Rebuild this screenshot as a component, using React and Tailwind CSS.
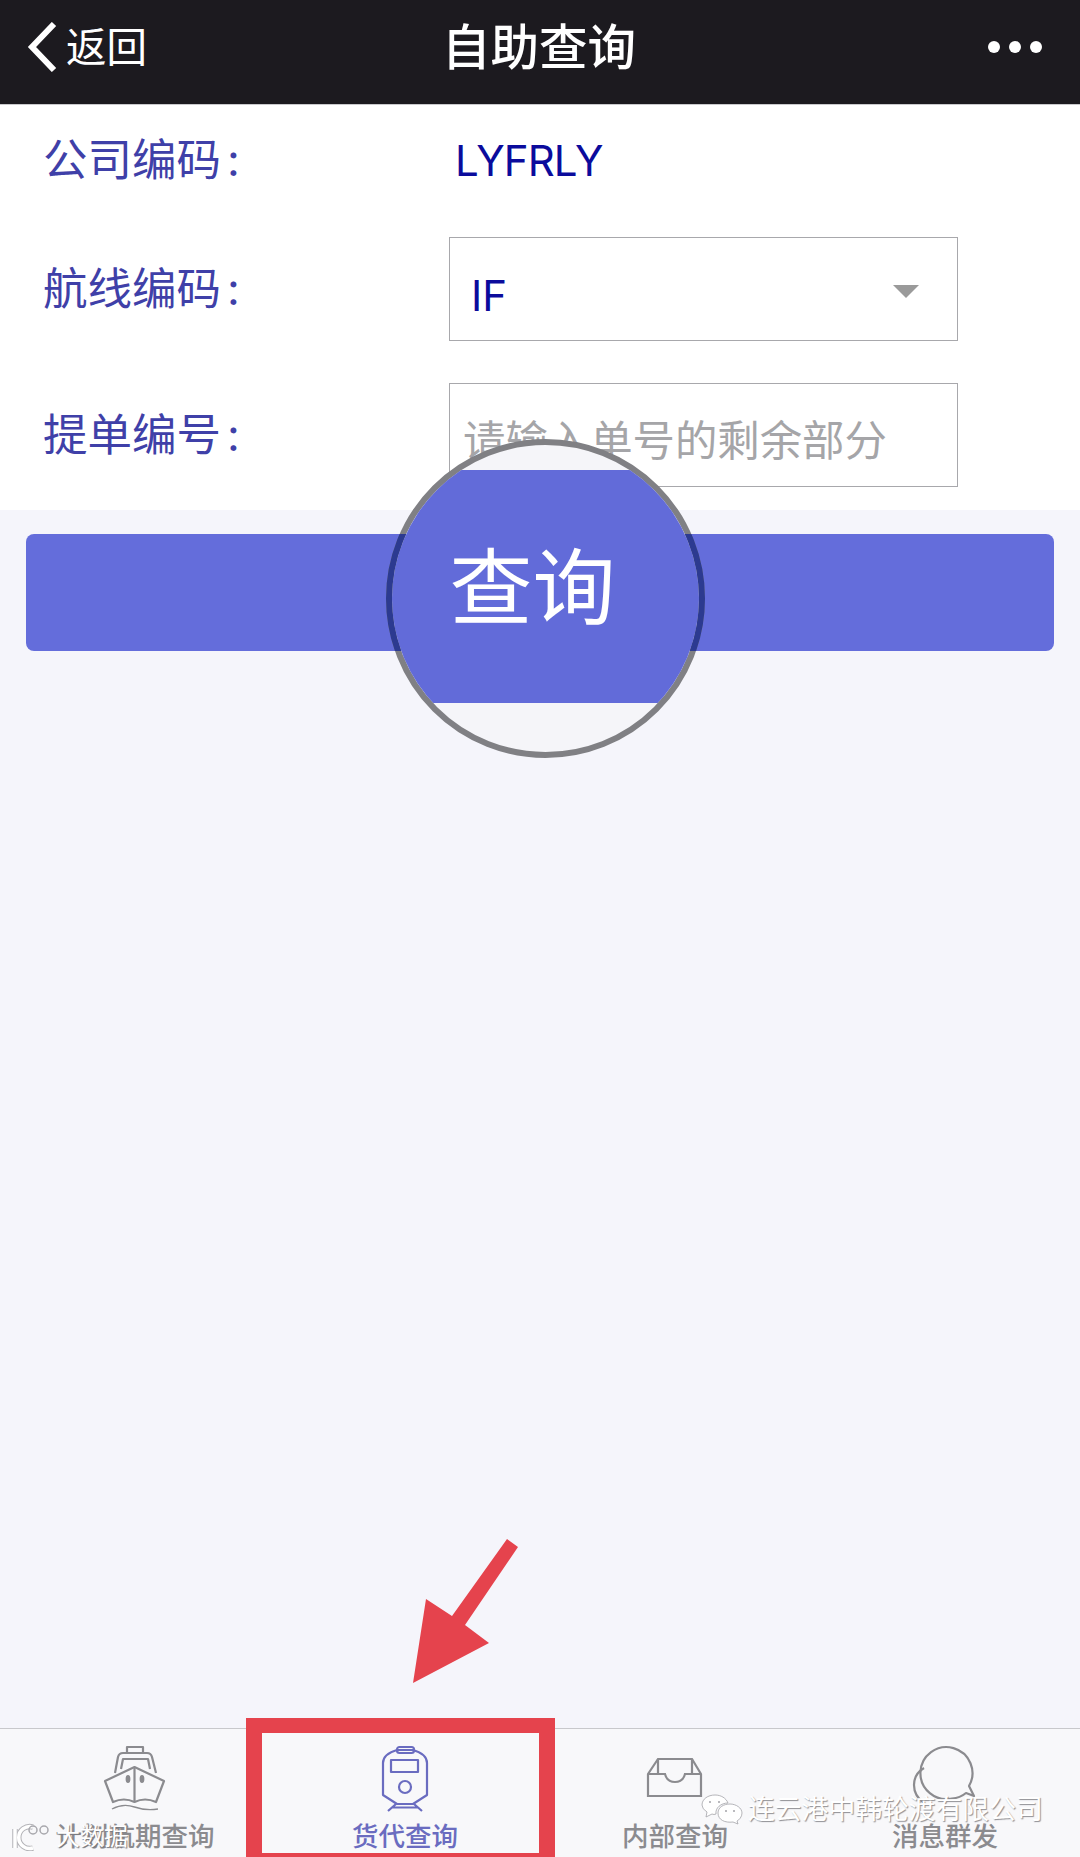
import React from "react";

const tabs = [
  { label: "计划航期查询", icon: ShipIcon },
  { label: "货代查询", icon: TrainIcon, active: true },
  { label: "内部查询", icon: InboxIcon },
  { label: "消息群发", icon: BubblesIcon },
];

function ShipIcon() {
  return (
    <svg viewBox="0 0 90 80" className="w-[90px] h-[80px]" fill="none" stroke="currentColor" strokeWidth="2.2" strokeLinejoin="round">
      <path d="M37 13V7H53V13" />
      <path d="M25 33L28 17Q29 13 33 13H57Q61 13 62 17L66 33" />
      <path d="M31 29L33 19H58L60 29" />
      <path d="M44.5 27L15 41L23 62Q34 57 44.5 62Q55 57 66 62L74 41Z" />
      <path d="M44.5 27V62" />
      <ellipse cx="38" cy="39" rx="1.3" ry="2.8" fill="currentColor" />
      <ellipse cx="52" cy="39" rx="1.3" ry="2.8" fill="currentColor" />
      <path d="M22 69Q33 63 44.5 67T68 69" strokeWidth="1.4" />
    </svg>
  );
}

function TrainIcon() {
  return (
    <svg viewBox="0 0 90 80" className="w-[90px] h-[80px]" fill="none" stroke="currentColor" strokeWidth="2.2" strokeLinejoin="round">
      <path d="M23 23Q23 14 37 10H53Q67 14 67 23V55L53 64H37L23 55Z" />
      <rect x="37" y="7" width="17" height="6" rx="2.5" />
      <rect x="31" y="20" width="27" height="12" />
      <circle cx="45" cy="47" r="6" />
      <path d="M36 64L28 71M54 64L62 71M32 67.5H58" />
    </svg>
  );
}

function InboxIcon() {
  return (
    <svg viewBox="0 0 90 80" className="w-[90px] h-[80px]" fill="none" stroke="currentColor" strokeWidth="2.2">
      <path d="M18 34V56H71V34L62 19H28Z" />
      <path d="M18 34H35Q37 42 45 42Q53 42 55 34H71" />
      <path d="M28 19V34M62 19V34" />
    </svg>
  );
}

function BubblesIcon() {
  return (
    <svg viewBox="0 0 90 80" className="w-[90px] h-[80px]" fill="none" stroke="currentColor" strokeWidth="2.2" strokeLinejoin="round">
      <path d="M66 53L74 56L69 46A26 26 0 1 0 52 58.500Q60 58 66 53Z" />
      <path d="M24 28Q14 34 14 45Q14 56 24 63" />
    </svg>
  );
}

function WeixinMark() {
  return (
    <svg viewBox="0 0 44 32" className="w-[44px] h-[32px]" fill="#ffffff" stroke="#a3a3a8" strokeWidth="0.8">
      <path d="M2 12C2 6 8 2 15 2C21 2 26 5 28 10C21 10 15 15 16 21Q14 22 12 21L6 24L7 19Q2 16 2 12Z" />
      <path d="M18 20C18 14 24 11 30 11C36 11 42 15 42 20C42 24 39 27 37 28L38 31L33 29C25 30 18 27 18 20Z" />
      <circle cx="10" cy="9" r="1" fill="#a3a3a8" stroke="none" />
      <circle cx="19" cy="9" r="1" fill="#a3a3a8" stroke="none" />
      <circle cx="26" cy="18" r="1" fill="#a3a3a8" stroke="none" />
      <circle cx="34" cy="18" r="1" fill="#a3a3a8" stroke="none" />
    </svg>
  );
}

function LogoMark() {
  return (
    <svg viewBox="0 0 40 28" className="w-[40px] h-[28px]" fill="none">
      <g stroke="#b4b4b8" strokeWidth="5.500">
        <path d="M3 6V25" />
        <path d="M21 4A11 11 0 1 0 21 25" />
      </g>
      <g stroke="#ffffff" strokeWidth="3.500">
        <path d="M3 6V25" />
        <path d="M21 4A11 11 0 1 0 21 25" />
      </g>
      <g stroke="#a8a8ad" strokeWidth="1.500">
        <circle cx="21" cy="7" r="4" />
        <circle cx="32" cy="7" r="4" />
      </g>
    </svg>
  );
}

function FieldLabel({ children }) {
  return (
    <span className="w-[406px] leading-none">
      {children}
      <span className="ml-[6px]">:</span>
    </span>
  );
}

export default function App() {
  return (
    <div className="relative w-[1080px] h-[1857px] overflow-hidden flex flex-col bg-[#f5f5fb] font-['Inter','Noto_Sans_CJK_SC',sans-serif]">
      {/* Header */}
      <div className="relative h-[105px] shrink-0 flex items-center justify-between pl-[27px] pr-[38px] pb-[11px] bg-[#1c1a1f] text-white border-b border-[#c9c9cc]">
        <div className="flex items-center gap-[9px]">
          <svg viewBox="0 0 30 50" className="w-[30px] h-[50px]" fill="none" stroke="currentColor" strokeWidth="6">
            <path d="M27 2L5 25L27 48" />
          </svg>
          <span className="mt-[4px] text-[40.500px] leading-none">返回</span>
        </div>
        <span className="absolute left-[442px] top-[24px] text-[48.500px] leading-none font-medium">自助查询</span>
        <div className="flex gap-[9px]">
          <span className="w-[12px] h-[12px] rounded-full bg-white" />
          <span className="w-[12px] h-[12px] rounded-full bg-white" />
          <span className="w-[12px] h-[12px] rounded-full bg-white" />
        </div>
      </div>

      {/* Form */}
      <div className="h-[405px] shrink-0 bg-white flex flex-col text-[#3f40a8] text-[44.500px]">
        <div className="h-[111px] flex items-center pl-[43px]">
          <FieldLabel>公司编码</FieldLabel>
          <span className="pl-[6px] text-[#0b0b9c] text-[42px] tracking-[-1px] leading-none">LYFRLY</span>
        </div>
        <div className="mt-[21px] h-[104px] flex items-center pl-[43px]">
          <FieldLabel>航线编码</FieldLabel>
          <div className="relative w-[509px] h-[104px] border border-[#a8a8ac] flex items-center pl-[21px] pt-[14px]">
            <span className="text-[#0b0b9c] text-[42px] leading-none">IF</span>
            <span className="absolute right-[38px] top-[47px] w-0 h-0 border-x-[13px] border-x-transparent border-t-[13px] border-t-[#9a9a9a]" />
          </div>
        </div>
        <div className="mt-[42px] h-[104px] flex items-center pl-[43px]">
          <FieldLabel>提单编号</FieldLabel>
          <input
            readOnly
            placeholder="请输入单号的剩余部分"
            className="w-[509px] h-[104px] border border-[#a8a8ac] pl-[13px] pt-[10px] text-[42.400px] placeholder:text-[#a5a5a8] outline-none"
          />
        </div>
      </div>

      {/* Query button */}
      <div className="mt-[24px] mx-[26px] h-[117px] shrink-0 rounded-lg bg-[#646ddb]" />

      {/* Tab bar */}
      <div className="mt-auto h-[129px] shrink-0 grid grid-cols-4 bg-[#f8f8fa] border-t border-[#c8c8cc]">
        {tabs.map(({ label, icon: Icon, active }) => (
          <div key={label} className={`flex flex-col items-center pt-[11px] ${active ? "text-[#6a6cc0]" : "text-[#8b8b8f]"}`}>
            <Icon />
            <span className="mt-[3px] text-[26.500px] leading-none font-medium">{label}</span>
          </div>
        ))}
      </div>

      {/* Magnifier over the button */}
      <div className="absolute left-[386px] top-[439px] w-[319px] h-[319px] rounded-full overflow-hidden flex flex-col bg-[#f5f5f9] border-[6px] border-[#808084]">
        <div className="h-[25px] shrink-0" />
        <div className="h-[233px] shrink-0 bg-[#626bd9] flex items-center justify-center pr-[26px] pt-[4px] text-white text-[83px] leading-none">查询</div>
      </div>
      {/* ring turns dark where it crosses the real button */}
      <div className="absolute left-[386px] top-[534px] w-[319px] h-[117px] overflow-hidden">
        <div className="w-[319px] h-[319px] -mt-[95px] rounded-full border-[6px] border-[#2c3a90]" />
      </div>

      {/* Red annotation */}
      <svg viewBox="0 0 180 180" className="absolute left-[380px] top-[1520px] w-[180px] h-[180px]" fill="#e5434d">
        <path d="M127 19L138 27L85 105L109 123L33 163L46 79L72 96Z" />
      </svg>
      <div className="absolute left-[246px] top-[1718px] w-[309px] h-[139px] border-x-[16px] border-t-[15px] border-b-[4px] border-[#e5434d]" />

      {/* Watermark */}
      <div className="absolute left-[700px] top-[1793px] flex items-center gap-[4px]">
        <WeixinMark />
        <span className="text-[26.800px] leading-none text-white [text-shadow:1px_1px_1px_#8f8f94]">连云港中韩轮渡有限公司</span>
      </div>
      <div className="absolute left-[12px] top-[1823px] flex items-center gap-[4px]">
        <LogoMark />
        <span className="text-[24px] leading-none text-white [text-shadow:1px_1px_1px_#77777c]">大数据</span>
      </div>
    </div>
  );
}
